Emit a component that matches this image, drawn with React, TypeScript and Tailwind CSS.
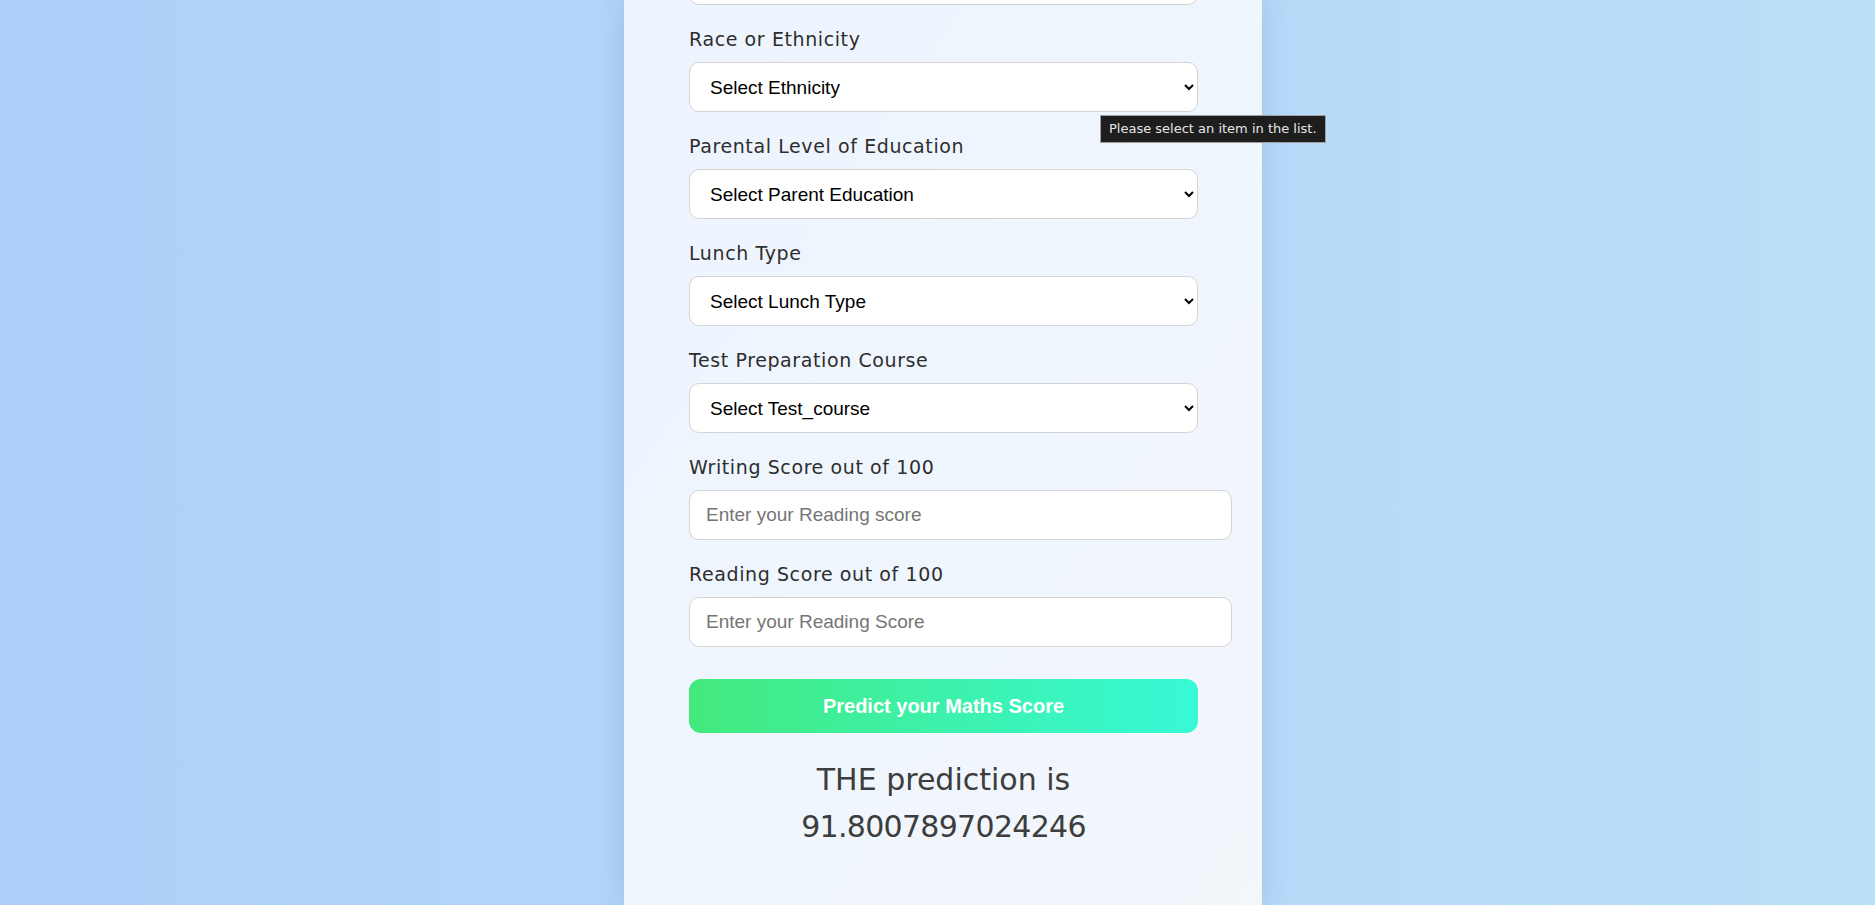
const selects = [
  { label: 'Race or Ethnicity', placeholder: 'Select Ethnicity' },
  { label: 'Parental Level of Education', placeholder: 'Select Parent Education' },
  { label: 'Lunch Type', placeholder: 'Select Lunch Type' },
  { label: 'Test Preparation Course', placeholder: 'Select Test_course' },
];

const inputs = [
  { label: 'Writing Score out of 100', placeholder: 'Enter your Reading score' },
  { label: 'Reading Score out of 100', placeholder: 'Enter your Reading Score' },
];

const labelCls =
  "block text-[19px] leading-[27px] tracking-[0.6px] text-[#2e2e2e] font-['DejaVu_Sans',sans-serif] mb-[9px]";
const selectCls =
  "w-[509px] h-[50px] rounded-[10px] border border-[#d4d4d4] bg-white pl-[16px] pr-[8px] text-[19px] text-black font-['Liberation_Sans',Arial,sans-serif] outline-none";

export default function App() {
  return (
    <div className="h-[905px] overflow-hidden bg-gradient-to-r from-[#aed0f9] to-[#badff8] flex justify-center pl-[11px]">
      <div className="relative w-[638px] h-full bg-gradient-to-br from-[#edf4fe] to-[#f2f7fc] shadow-[0_0_28px_rgba(40,80,140,0.18)] pl-[65px]">
        {/* form column, scrolled so the gender field is cut off at the top */}
        <div className="flex flex-col -mt-[45px]">
          <div className="mb-[21px]">
            <select className={selectCls} defaultValue="">
              <option value="">Select Gender</option>
            </select>
          </div>

          {selects.map((s) => (
            <div key={s.label} className="mb-[21px]">
              <label className={labelCls}>{s.label}</label>
              <select className={selectCls} defaultValue="">
                <option value="" disabled>
                  {s.placeholder}
                </option>
              </select>
            </div>
          ))}

          {inputs.map((i) => (
            <div key={i.label} className="mb-[21px]">
              <label className={labelCls}>{i.label}</label>
              <input
                type="number"
                placeholder={i.placeholder}
                className="w-[543px] h-[50px] rounded-[10px] border border-[#d4d4d4] bg-white px-[16px] text-[19px] text-black placeholder:text-[#757575] font-['Liberation_Sans',Arial,sans-serif] outline-none"
              />
            </div>
          ))}

          <button className="mt-[11px] w-[509px] h-[54px] rounded-[12px] bg-gradient-to-r from-[#43e97b] to-[#38f9d7] text-white text-[20px] font-bold font-['Liberation_Sans',Arial,sans-serif]">
            Predict your Maths Score
          </button>

          <h2 className="w-[509px] mt-[23px] text-center text-[30px] leading-[47px] text-[#3d3d3d] font-['DejaVu_Sans',sans-serif]">
            THE prediction is
            <br />
            <span className="tracking-[-0.7px]">91.8007897024246</span>
          </h2>
        </div>

        {/* native validation bubble */}
        <div className="absolute left-[476px] top-[115px] border border-[#a0a0a0] bg-[#1e1e1e] px-[8px] py-[4px] text-[13px] leading-[18px] text-[#e6e6e6] font-['DejaVu_Sans','Open_Sans',sans-serif] whitespace-nowrap">
          Please select an item in the list.
        </div>
      </div>
    </div>
  );
}
